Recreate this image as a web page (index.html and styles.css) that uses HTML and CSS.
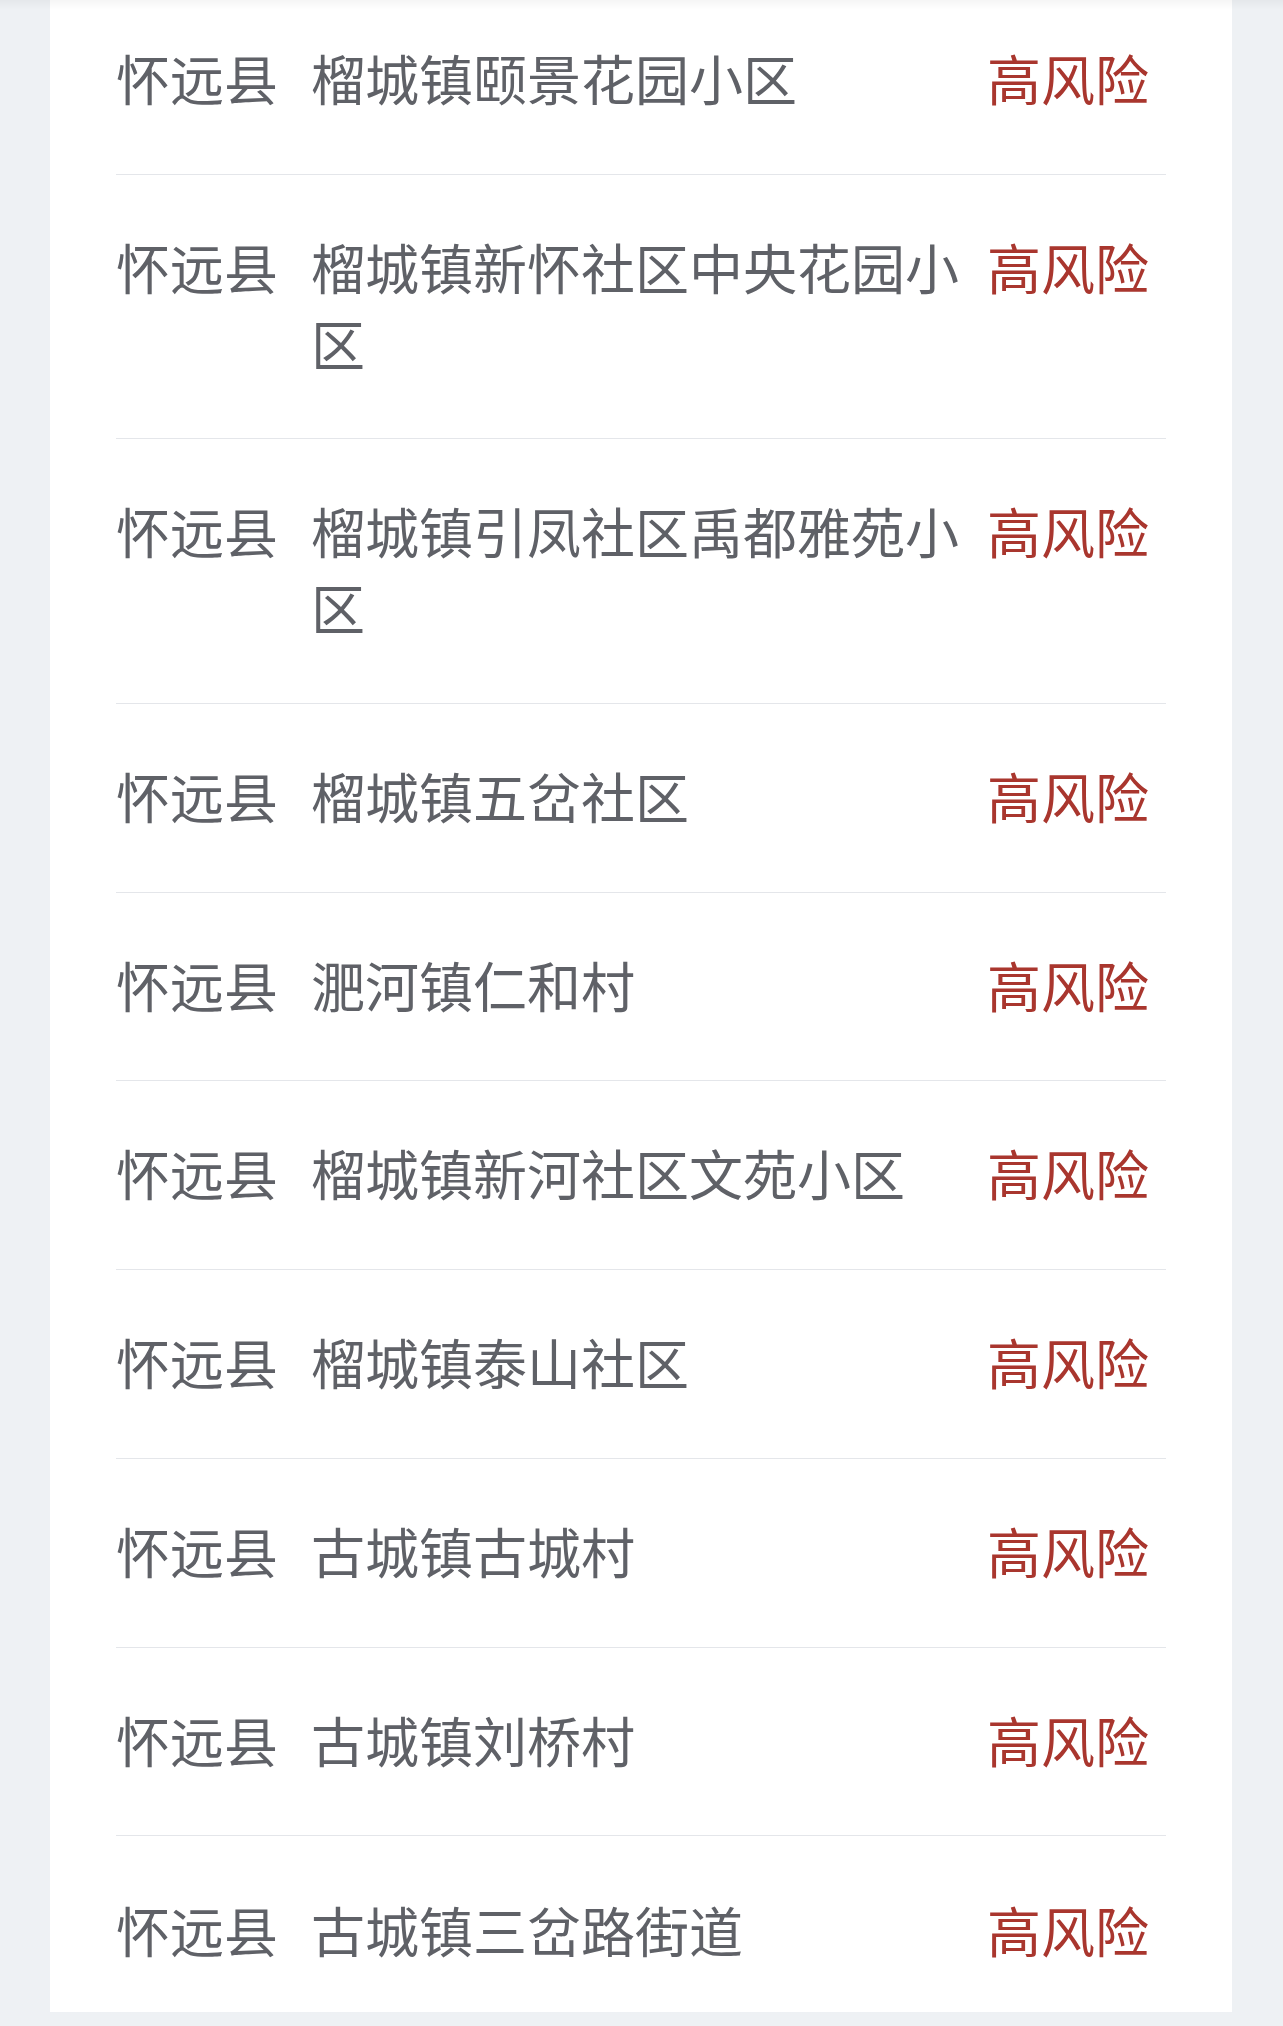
FILE: index.html
```html
<!DOCTYPE html>
<html lang="zh-CN">
<head>
<meta charset="utf-8">
<title>风险地区</title>
<link rel="stylesheet" href="styles.css">
</head>
<body>
<div class="top-shade"></div>
<main class="page">
  <section class="card">
    <ul class="list">
      <li class="row"><span class="county">怀远县</span><span class="addr">榴城镇颐景花园小区</span><span class="risk">高风险</span></li>
      <li class="row"><span class="county">怀远县</span><span class="addr">榴城镇新怀社区中央花园小区</span><span class="risk">高风险</span></li>
      <li class="row"><span class="county">怀远县</span><span class="addr">榴城镇引凤社区禹都雅苑小区</span><span class="risk">高风险</span></li>
      <li class="row"><span class="county">怀远县</span><span class="addr">榴城镇五岔社区</span><span class="risk">高风险</span></li>
      <li class="row"><span class="county">怀远县</span><span class="addr">淝河镇仁和村</span><span class="risk">高风险</span></li>
      <li class="row"><span class="county">怀远县</span><span class="addr">榴城镇新河社区文苑小区</span><span class="risk">高风险</span></li>
      <li class="row"><span class="county">怀远县</span><span class="addr">榴城镇泰山社区</span><span class="risk">高风险</span></li>
      <li class="row"><span class="county">怀远县</span><span class="addr">古城镇古城村</span><span class="risk">高风险</span></li>
      <li class="row"><span class="county">怀远县</span><span class="addr">古城镇刘桥村</span><span class="risk">高风险</span></li>
      <li class="row"><span class="county">怀远县</span><span class="addr">古城镇三岔路街道</span><span class="risk">高风险</span></li>
    </ul>
  </section>
</main>
</body>
</html>
```

FILE: styles.css
```css
html, body {
  margin: 0;
  padding: 0;
}
body {
  background: #eef1f4;
  font-family: "Noto Sans CJK SC", "Noto Sans", sans-serif;
  font-size: 54px;
  line-height: 76px;
  color: #5f6167;
  overflow: hidden;
}
.top-shade {
  position: fixed;
  top: 0;
  left: 0;
  right: 0;
  height: 10px;
  background: linear-gradient(to bottom, rgba(0, 0, 0, 0.035), rgba(0, 0, 0, 0));
  z-index: 2;
}
.page {
  padding: 0 51px 0 50px;
}
.card {
  background: #ffffff;
  padding: 0 66px;
  margin-top: -14px;
}
.list {
  list-style: none;
  margin: 0;
  padding: 0;
}
.row {
  display: flex;
  align-items: flex-start;
  padding: 54px 17px 57.7px 0;
  border-bottom: 1px solid #e4e6ea;
}
.row:last-child {
  border-bottom: none;
  padding-top: 56px;
  padding-bottom: 44px;
}
.county {
  flex: none;
  width: 162px;
  margin-right: 33px;
  white-space: nowrap;
}
.addr {
  flex: 1;
  margin-right: 20px;
  min-width: 0;
}
.risk {
  flex: none;
  color: #a9362e;
  white-space: nowrap;
}
```
